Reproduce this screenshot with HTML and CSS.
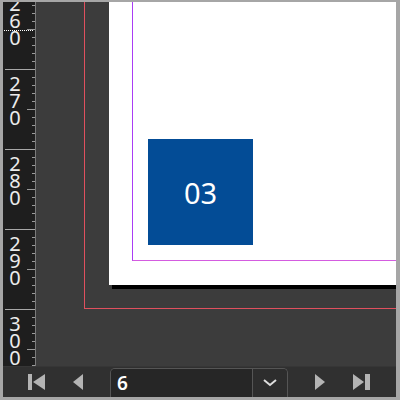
FILE: index.html
```html
<!DOCTYPE html>
<html>

<head>
    <title>Layout View</title>
    <link rel="stylesheet" href="styles.css">
</head>

<body>
    <div class="frame">
        <div class="workspace">
            <!-- Vertical ruler -->
            <div class="ruler">
                <div class="cursor-line"></div>
                <div class="segment first"><div class="digits"><span>2</span><span>6</span><span>0</span></div></div>
                <div class="segment"><div class="digits"><span>2</span><span>7</span><span>0</span></div></div>
                <div class="segment"><div class="digits"><span>2</span><span>8</span><span>0</span></div></div>
                <div class="segment"><div class="digits"><span>2</span><span>9</span><span>0</span></div></div>
                <div class="segment"><div class="digits"><span>3</span><span>0</span><span>0</span></div></div>
            </div>

            <!-- Pasteboard with page -->
            <div class="pasteboard">
                <div class="bleed"></div>
                <div class="page">
                    <div class="margins"></div>
                    <div class="block">03</div>
                </div>
            </div>
        </div>

        <!-- Page navigation -->
        <div class="pager">
            <button class="nav first-btn">
                <svg width="18" height="16" viewBox="0 0 18 16">
                    <rect x="0" y="0" width="4" height="16" fill="#b4b4b4" />
                    <polygon points="17,0 5,8 17,16" fill="#b4b4b4" />
                </svg>
            </button>
            <button class="nav prev-btn">
                <svg width="10" height="16" viewBox="0 0 10 16">
                    <polygon points="10,0 0,8 10,16" fill="#b4b4b4" />
                </svg>
            </button>
            <div class="page-select">
                <div class="page-value">6</div>
                <div class="page-drop">
                    <svg width="14" height="8" viewBox="0 0 14 8">
                        <polyline points="1,1 7,6 13,1" fill="none" stroke="#dcdcdc" stroke-width="2" />
                    </svg>
                </div>
            </div>
            <button class="nav next-btn">
                <svg width="10" height="16" viewBox="0 0 10 16">
                    <polygon points="0,0 10,8 0,16" fill="#b4b4b4" />
                </svg>
            </button>
            <button class="nav last-btn">
                <svg width="17" height="16" viewBox="0 0 17 16">
                    <polygon points="0,0 11,8 0,16" fill="#b4b4b4" />
                    <rect x="12" y="0" width="5" height="16" fill="#b4b4b4" />
                </svg>
            </button>
        </div>
    </div>
</body>

</html>
```

FILE: styles.css
```css
body {
    margin: 0;
    background-color: #a8a8a8;
    font-family: 'Noto Sans', sans-serif;
}

.frame {
    width: 400px;
    height: 400px;
    box-sizing: border-box;
    border-style: solid;
    border-color: #a6a6a6;
    border-width: 2px 4px 3px 3px;
    display: flex;
    flex-direction: column;
    overflow: hidden;
}

.workspace {
    flex: 1;
    display: flex;
    min-height: 0;
}

/* Ruler */
.ruler {
    position: relative;
    width: 32px;
    border-right: 1px solid #7a7a7a;
    background-color: #1e1e1e;
    background-image:
        linear-gradient(#9a9a9a 1px, transparent 1px),
        linear-gradient(#9a9a9a 1px, transparent 1px);
    background-size: 3px 8px, 8px 80px;
    background-position: right 0 top 3px, right 0 top 27px;
    background-repeat: repeat-y;
    display: flex;
    flex-direction: column;
    overflow: hidden;
}

.segment {
    flex: none;
    height: 80px;
    box-sizing: border-box;
    margin-left: 2px;
    border-top: 1px solid #a8a8a8;
    padding-top: 5px;
}

.segment.first {
    margin-top: -13px;
}

.digits {
    width: 20px;
    display: flex;
    flex-direction: column;
    align-items: center;
    color: #ececec;
    font-size: 20px;
    line-height: 17px;
}

.cursor-line {
    position: absolute;
    top: 28px;
    left: 1px;
    width: 29px;
    border-top: 1px dotted #ffffff;
}

/* Pasteboard */
.pasteboard {
    position: relative;
    flex: 1;
    background-color: #3c3c3c;
    overflow: hidden;
}

.bleed {
    position: absolute;
    left: 48px;
    top: -50px;
    width: 400px;
    height: 356px;
    border-left: 1px solid #e0505e;
    border-bottom: 1px solid #e0505e;
}

.page {
    position: absolute;
    left: 73px;
    top: -50px;
    width: 400px;
    height: 333px;
    background-color: #fff;
    box-shadow: 3px 4px 0 #000;
}

.margins {
    position: absolute;
    left: 23px;
    top: 0;
    width: 400px;
    height: 308px;
    border-left: 1px solid #a93cf5;
    border-bottom: 1px solid #d45ce0;
}

.block {
    position: absolute;
    left: 39px;
    top: 187px;
    width: 105px;
    height: 106px;
    background-color: #034c96;
    color: #fff;
    font-size: 29px;
    display: flex;
    align-items: center;
    justify-content: center;
}

/* Pager */
.pager {
    flex: none;
    height: 31px;
    background-color: #303030;
    border-top: 1px solid #363636;
    box-sizing: border-box;
    display: flex;
    padding-left: 16px;
}

.nav {
    width: 36px;
    padding: 7px 0 0;
    border: none;
    background: none;
    display: flex;
    justify-content: center;
    align-items: flex-start;
}

.prev-btn {
    margin-left: 5px;
}

.next-btn {
    margin-left: 14px;
}

.last-btn {
    margin-left: 5px;
}

.page-select {
    margin-left: 14px;
    margin-top: 1px;
    width: 178px;
    box-sizing: border-box;
    border: 1px solid #555;
    border-bottom: none;
    border-radius: 5px 5px 0 0;
    display: flex;
    overflow: hidden;
}

.page-value {
    flex: 1;
    background-color: #262626;
    color: #fff;
    font-size: 19px;
    font-weight: 600;
    line-height: 28px;
    padding-left: 6px;
}

.page-drop {
    width: 35px;
    border-left: 1px solid #555;
    background-color: #2d2d2d;
    display: flex;
    justify-content: center;
    padding-top: 10px;
    box-sizing: border-box;
}
```
